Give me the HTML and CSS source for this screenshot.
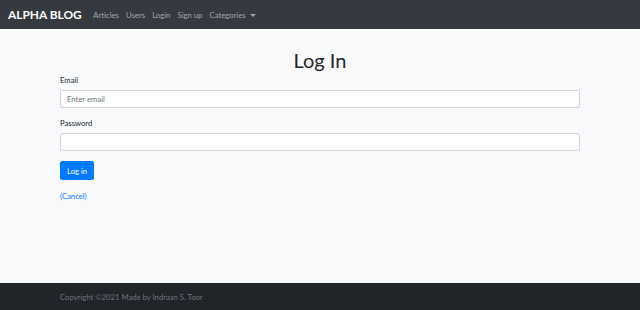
FILE: index.html
```html
<html>
<head>
<meta name="viewport" content="width=device-width, initial-scale=1" />
<title>Alpha Blog - Log In</title>
<link rel="stylesheet" href="styles.css">
</head>
<body>
<div class="page">
  <nav class="navbar">
    <a class="brand" href="#">ALPHA BLOG</a>
    <ul class="nav-links">
      <li><a href="#">Articles</a></li>
      <li><a href="#">Users</a></li>
      <li><a href="#">Login</a></li>
      <li><a href="#">Sign up</a></li>
      <li><a href="#" class="dropdown">Categories</a></li>
    </ul>
  </nav>

  <main class="content">
    <h1 class="title">Log In</h1>
    <form class="login-form">
      <div class="form-group">
        <label for="email">Email</label>
        <input id="email" type="email" placeholder="Enter email">
      </div>
      <div class="form-group">
        <label for="password">Password</label>
        <input id="password" type="password">
      </div>
      <button type="button" class="btn">Log in</button>
      <a class="cancel" href="#">(Cancel)</a>
    </form>
  </main>

  <footer class="footer">
    <div class="footer-inner">Copyright ©2021 Made by Indraan S. Toor</div>
  </footer>
</div>
</body>
</html>
```
FILE: styles.css
```css
body { margin: 0; font-family: Lato, "Open Sans", sans-serif; font-size: 7.7px; color: #212529; background-color: #f8f9fa; }
a { text-decoration: none; }
.page { display: flex; flex-direction: column; min-height: 100vh; }

.navbar { display: flex; align-items: center; height: 29px; padding: 0 8px; background-color: #343a40; }
.brand { color: #fff; font-weight: bold; font-size: 11.9px; margin-right: 8px; }
.nav-links { display: flex; list-style: none; margin: 0; padding: 0; }
.nav-links a { display: block; padding: 0 3.6px; color: rgba(255,255,255,.55); font-size: 7.7px; }
.nav-links a.dropdown:after { content: ""; display: inline-block; margin-left: 4px; vertical-align: 1px; border-top: 3px solid; border-left: 3px solid transparent; border-right: 3px solid transparent; }

.content { flex: 1; padding: 0 60px; }
.title { margin: 20px 0 3px; text-align: center; font-weight: 400; font-size: 20px; line-height: 22px; color: #212529; }
.login-form { display: flex; flex-direction: column; align-items: flex-start; }
.form-group { width: 100%; margin-bottom: 9px; }
.form-group label { display: block; margin-bottom: 4px; line-height: 12px; color: #212529; }
.form-group input { display: block; box-sizing: border-box; width: 100%; height: 18px; padding: 0 6px; font-family: inherit; font-size: 7.7px; color: #495057; background: #fff; border: 1px solid #ced4da; border-radius: 2px; }
.form-group input::placeholder { color: #6c757d; }
.btn { margin-top: 1px; height: 19px; padding: 0 6px; font-family: inherit; font-size: 7.7px; color: #fff; background-color: #007bff; border: 1px solid #007bff; border-radius: 2px; }
.cancel { margin-top: 10px; color: #007bff; line-height: 12px; }

.footer { height: 27px; display: flex; align-items: center; background-color: #212529; }
.footer-inner { padding: 0 60px; color: #6c757d; font-size: 7.7px; }
```
